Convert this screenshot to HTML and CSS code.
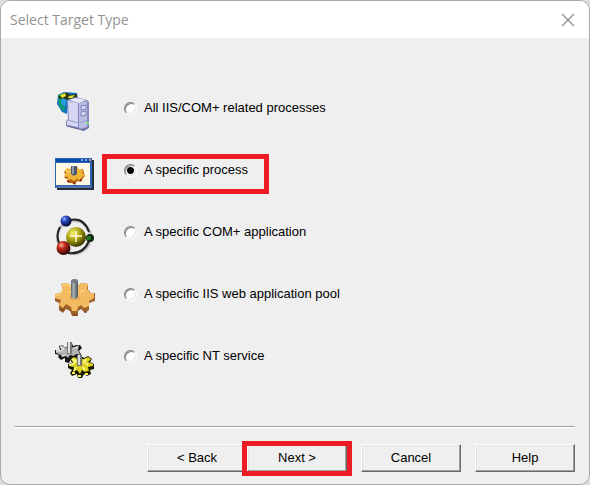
FILE: index.html
```html
<!DOCTYPE html>
<html lang="en">
<head>
<meta charset="utf-8">
<title>Select Target Type</title>
<link rel="stylesheet" href="styles.css">
</head>
<body>
<form class="dialog">
  <header class="titlebar">
    <h1>Select Target Type</h1>
    <button type="button" class="close" aria-label="Close">
      <svg width="14" height="14" viewBox="0 0 14 14" aria-hidden="true"><path d="M1 1L13 13M13 1L1 13" stroke="#8c8c8c" stroke-width="1.2"/></svg>
    </button>
  </header>

  <main class="options">
    <div class="row">
      <svg class="icon" viewBox="0 3 50 50" aria-hidden="true">
        <path d="M8 10L14 7L27 8L28 15L18 20L17 29L12 27L7 19Z" fill="#126ebd"/>
        <path d="M8 10L13 8L12 13L16 16L12 19L16 24L13 26L9 21Z" fill="#119873"/>
        <path d="M12 13L17 15L15 22L11 18Z" fill="#2b9be0"/>
        <path d="M8 12L14 8H18L20 10L27 9V13L21 14L16 15L14 13L10 14Z" fill="#303a13"/>
        <path d="M10 10L15 8L16 11L12 13ZM19 11L25 10L22 13H18Z" fill="#e5e12c"/>
        <path d="M17 15L25 12L37 15L39 17V43L34 46L16 41V36L18 34Z" fill="#8588bd"/>
        <path d="M18 16L28 18V42L17 40V36L19 35Z" fill="#d5d7f2"/>
        <path d="M19 15L26 13L36 15L29 18Z" fill="#e9e9fb"/>
        <path d="M29 18L37 16V42L29 44Z" fill="#babce4"/>
        <path d="M31 21L36 20V24L31 25ZM31 27L36 26V30L31 31Z" fill="#d7d9f5" stroke="#7e80b3"/>
        <path d="M17 35L29 38L38 35" fill="none" stroke="#9a9ccb"/>
        <path d="M17 41L33 45L39 42" fill="none" stroke="#666696"/>
        <path d="M36 37H39V39H36Z" fill="#78ec77"/>
      </svg>
      <label class="option"><input type="radio" name="target"><span>All IIS/COM+ related processes</span></label>
    </div>

    <div class="row">
      <svg class="icon" viewBox="0 0 50 50" aria-hidden="true">
        <path d="M7 10H44V40H7Z" fill="#292e3b"/>
        <path d="M5 8H42V38H5Z" fill="#2865b4"/>
        <path d="M6 9H41V12H6Z" fill="#0b4aa7"/>
        <path d="M6 13H40V35H6Z" fill="#fff8e5"/>
        <path d="M6 36H41V38H6Z" fill="#5872ad"/>
        <path d="M31 9H33V11H31ZM35 9H37V11H35Z" fill="#81a9e4"/><path d="M39 9H41V11H39Z" fill="#e58978"/>
        <path d="M14 22L17 19L20 20L22 17H27L29 20L33 19L34 23L35 26L33 28L31 32L27 31L25 35L22 33L18 33V29L14 28L16 25Z" fill="#b66716"/>
        <path d="M15 20L18 18L21 20L23 17H27L29 19L33 20L32 23L35 25L31 28L30 30L26 29L24 31L21 29L18 30V27L14 26L16 23Z" fill="#efb538"/>
        <path d="M16 21L20 22L24 19" fill="none" stroke="#ffe183"/>
        <path d="M21 16V24Q24 27 27 24V16Z" fill="#4e586d"/><path d="M22 16H24V24H22Z" fill="#8d9aae"/>
        <path d="M17 30H19V32H17ZM23 32H25V34H23ZM30 29H32V31H30Z" fill="#a62e17"/>
      </svg>
      <label class="option marked"><input type="radio" name="target" checked><span>A specific process</span></label>
    </div>

    <div class="row">
      <svg class="icon" viewBox="0 0 50 50" aria-hidden="true">
        <defs>
          <radialGradient id="blue" cx=".35" cy=".3" r=".7"><stop stop-color="#9cb6ff"/><stop offset=".35" stop-color="#304bc7"/><stop offset="1" stop-color="#07092c"/></radialGradient>
          <radialGradient id="red" cx=".35" cy=".3" r=".7"><stop stop-color="#ffb0a0"/><stop offset=".35" stop-color="#c62b1b"/><stop offset="1" stop-color="#350505"/></radialGradient>
          <radialGradient id="gold" cx=".35" cy=".3" r=".75"><stop stop-color="#f3ef70"/><stop offset=".5" stop-color="#a39b0d"/><stop offset="1" stop-color="#302b00"/></radialGradient>
        </defs>
        <circle cx="24" cy="25" r="16.5" fill="none" stroke="#bdbdbd" stroke-width="3"/>
        <path d="M10 15Q5 24 10 33M20 8Q34 5 39 20M39 29Q33 43 18 41" fill="none" stroke="#242424" stroke-width="2"/>
        <circle cx="26" cy="25" r="10" fill="url(#gold)"/>
        <path d="M26 19V30M20 24H32" stroke="#fffbd0" stroke-width="1.5"/>
        <circle cx="16" cy="9" r="5.5" fill="url(#blue)"/>
        <circle cx="13.5" cy="36" r="7" fill="url(#red)"/>
        <circle cx="40" cy="26" r="4" fill="#142711"/><path d="M37 24H41V28H37Z" fill="#1c761d"/>
      </svg>
      <label class="option"><input type="radio" name="target"><span>A specific COM+ application</span></label>
    </div>

    <div class="row">
      <svg class="icon" viewBox="0 -1 50 50" aria-hidden="true">
        <defs><linearGradient id="shaft"><stop stop-color="#5c656c"/><stop offset=".35" stop-color="#a8b0b7"/><stop offset="1" stop-color="#475059"/></linearGradient></defs>
        <path d="M11 9L17 8L20 10H29L31 8L38 9V15L41 18L45 18V26L39 28V35L35 38L31 34L28 36V41H22L20 36L16 34L13 38L9 35V28L5 26V19L10 18L13 14Z" fill="#9f612a"/>
        <path d="M11 9L17 8L20 10H29L31 8L38 9L37 14L40 18L44 18V23L39 26V31L34 33L31 30L28 32L27 36H22L21 32L16 29L13 33L9 30L11 25L5 23V19L10 18L13 14Z" fill="#f2bb62"/>
        <path d="M12 10L17 9L20 12M13 15L10 19L6 20M18 17H21M30 17L35 15" fill="none" stroke="#ffd581" stroke-width="1.5"/>
        <path d="M20 21L20 23Q25 26 31 22" fill="none" stroke="#d69f50"/>
        <path d="M21 6Q24 2 28 6V22Q25 25 21 22Z" fill="url(#shaft)"/>
        <ellipse cx="24.5" cy="6" rx="3.5" ry="2" fill="#777f86"/>
        <path d="M10 35H14M23 40H27M34 37H37" stroke="#6e3d22"/>
      </svg>
      <label class="option"><input type="radio" name="target"><span>A specific IIS web application pool</span></label>
    </div>

    <div class="row">
      <svg class="icon" viewBox="0 -2 50 50" aria-hidden="true">
        <path d="M9 8L13 7L15 10L18 8V5H22L23 8L27 7L30 7L32 10L29 13L31 16V20L27 19L25 22L21 21L19 25L15 24V20L11 22L8 19L9 17L5 16V12L10 12Z" fill="#161616"/>
        <path d="M10 8L13 7L15 10L25 9L29 7L28 12L30 16L26 16L24 18L20 17L18 20L16 18L12 19L11 17L6 15V12L11 12Z" fill="#b2b2b2"/>
        <path d="M10 9L14 11L11 13L6 13M24 10L28 9M12 18L15 17" fill="none" stroke="#f5f5f5"/>
        <path d="M17 4H22V16H17Z" fill="#777"/><path d="M18 4H20V15H18Z" fill="#e3e3e3"/>
        <path d="M20 21L23 18L27 20L31 18L34 20L38 18L42 21L40 24L44 26V31L40 32L41 36L37 38L34 36L32 40H28L27 36L22 38L20 35L22 32L18 30V26L22 25Z" fill="#171700"/>
        <path d="M21 21L24 19L28 21L34 21L38 19L41 21L38 24L43 26V28L38 29L39 33L35 34L32 32L30 36L27 32L23 34L24 29L19 28V26L23 25Z" fill="#dbd020"/>
        <path d="M22 21L26 23L23 26L19 27M36 21L34 24L38 27M24 33L26 29M35 32L33 29" fill="none" stroke="#ffffa1" stroke-width="1.5"/>
        <path d="M27 17Q29 15 32 17V28H27Z" fill="#757575"/><path d="M28 17H30V27H28Z" fill="#ddd"/>
        <path d="M22 35H25M28 38H31M35 36H38" stroke="#fff052" stroke-width="2"/>
      </svg>
      <label class="option"><input type="radio" name="target"><span>A specific NT service</span></label>
    </div>
  </main>

  <footer class="actions">
    <div class="pair">
      <button type="button">&lt; Back</button>
      <button type="button" class="marked">Next &gt;</button>
    </div>
    <button type="button">Cancel</button>
    <button type="button">Help</button>
  </footer>
</form>
</body>
</html>
```
FILE: styles.css
```css
* {
  box-sizing: border-box;
}

body {
  margin: 0;
  background: #dedede;
  color: #000;
  font: 13px/16px "Liberation Sans", Arial, sans-serif;
}

.dialog {
  display: flex;
  flex-direction: column;
  min-height: 100vh;
  overflow: hidden;
  border: 1px solid #a9a9a9;
  border-radius: 10px;
  background: #efefef;
}

.titlebar {
  display: flex;
  align-items: center;
  justify-content: space-between;
  height: 37px;
  padding: 0 14px 0 9px;
  background: #fff;
}

.titlebar h1 {
  margin: 0;
  color: #929292;
  font: 400 14px/20px "Open Sans", "Noto Sans", sans-serif;
}

.close {
  display: flex;
  padding: 0;
  border: 0;
  background: none;
}

.options {
  flex: 1;
  padding: 38px 49px 0;
}

.row {
  display: flex;
  align-items: flex-start;
  height: 62px;
}

.icon {
  flex: none;
  width: 50px;
  height: 50px;
  margin-top: 12px;
}

.option {
  position: relative;
  display: flex;
  align-items: center;
  gap: 7px;
  margin-left: 2px;
  padding: 24px 21px 16px 22px;
}

.option input {
  appearance: none;
  width: 13px;
  height: 13px;
  margin: 0;
  border: 1px solid;
  border-color: #858585 #fff #fff #858585;
  border-radius: 50%;
  background: #fff;
  box-shadow: inset 1px 1px #8b8b8b, inset -1px -1px #e3e3e3;
}

.option input:checked {
  background: radial-gradient(circle, #000 3px, #fff 4px);
}

.marked {
  position: relative;
}

.marked::after {
  position: absolute;
  border: 5px solid #ed1c24;
  content: "";
  pointer-events: none;
}

.option.marked::after {
  inset: 16px 0 0;
}

.actions {
  display: flex;
  justify-content: flex-end;
  gap: 14px;
  margin: 0 14px;
  padding: 17px 0 12px;
  border-top: 1px solid #a0a0a0;
  box-shadow: inset 0 1px #fff;
}

.pair {
  display: flex;
}

.actions button {
  width: 100px;
  height: 28px;
  padding: 0;
  border: 1px solid;
  border-color: #fff #696969 #696969 #fff;
  background: #efefef;
  box-shadow: inset -1px -1px #a0a0a0, inset 1px 1px #e3e3e3;
  color: inherit;
  font: inherit;
}

.actions .marked::after {
  inset: -4px -6px -5px;
}
```
